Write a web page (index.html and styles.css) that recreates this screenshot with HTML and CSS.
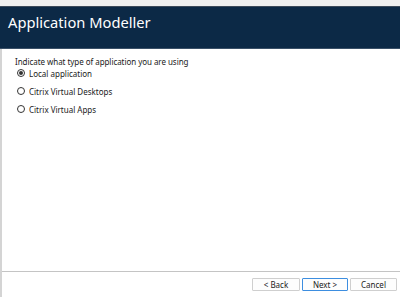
FILE: index.html
```html
<!doctype html>
<html>
  <head>
    <meta charset="UTF-8" />
    <title>Application Modeller</title>
    <link rel="stylesheet" href="styles.css">
  </head>
  <body>
    <div class="topstrip"></div>
    <div class="window">
      <div class="header">
        <h1>Application Modeller</h1>
      </div>
      <div class="content">
        <p class="prompt">Indicate what type of application you are using</p>
        <label class="option first"><span class="radio checked"></span>Local application</label>
        <label class="option"><span class="radio"></span>Citrix Virtual Desktops</label>
        <label class="option"><span class="radio"></span>Citrix Virtual Apps</label>
      </div>
      <div class="footer">
        <button class="btn back">&lt; Back</button>
        <button class="btn default">Next &gt;</button>
        <button class="btn">Cancel</button>
      </div>
    </div>
  </body>
</html>
```

FILE: styles.css
```css
html,
body {
  margin: 0;
  height: 100%;
  background: #ffffff;
  font-family: "Noto Sans", "Open Sans", sans-serif;
  overflow: hidden;
}

.topstrip {
  height: 6px;
  background: #f0f0f0;
}

.window {
  display: flex;
  flex-direction: column;
  height: 291px;
  border-left: 2px solid #d4d4d4;
  box-sizing: border-box;
}

.header {
  height: 43px;
  background: #0c2946;
  border-top: 1px solid #3c4a5a;
  border-bottom: 1px solid #3a5068;
  box-sizing: border-box;
  padding: 5px 0 0 8px;
  margin-left: -2px;
}

.header h1 {
  margin: 0;
  color: #ffffff;
  font-weight: normal;
  font-size: 14.7px;
  line-height: 20px;
}

.content {
  flex: 1;
  padding: 8px 0 0 13px;
  color: #1a1a1a;
  font-size: 8px;
}

.prompt {
  margin: 0;
  line-height: 10px;
  letter-spacing: -0.05px;
}

.option {
  display: flex;
  align-items: center;
  gap: 4px;
  height: 18px;
  padding-left: 2px;
}

.option.first {
  height: 12px;
  margin-bottom: 3px;
}

.radio {
  width: 6px;
  height: 6px;
  border: 1px solid #333;
  border-radius: 50%;
  display: flex;
  align-items: center;
  justify-content: center;
}

.radio.checked::after {
  content: "";
  width: 4px;
  height: 4px;
  border-radius: 50%;
  background: #333;
}

.footer {
  border-top: 1px solid #c4c4c4;
  height: 25px;
  display: flex;
  justify-content: flex-end;
  align-items: center;
  gap: 2px;
  padding-right: 3px;
  margin-top: 1px;
}

.btn {
  width: 47px;
  height: 13px;
  font-family: inherit;
  font-size: 8px;
  padding: 0;
  background: #fdfdfd;
  border: 1px solid #cfcfcf;
  border-radius: 1px;
  color: #222;
  line-height: 11px;
}

.btn.back {
  width: 48px;
}

.btn.default {
  border-color: #3d8ee0;
  width: 46px;
}
```
